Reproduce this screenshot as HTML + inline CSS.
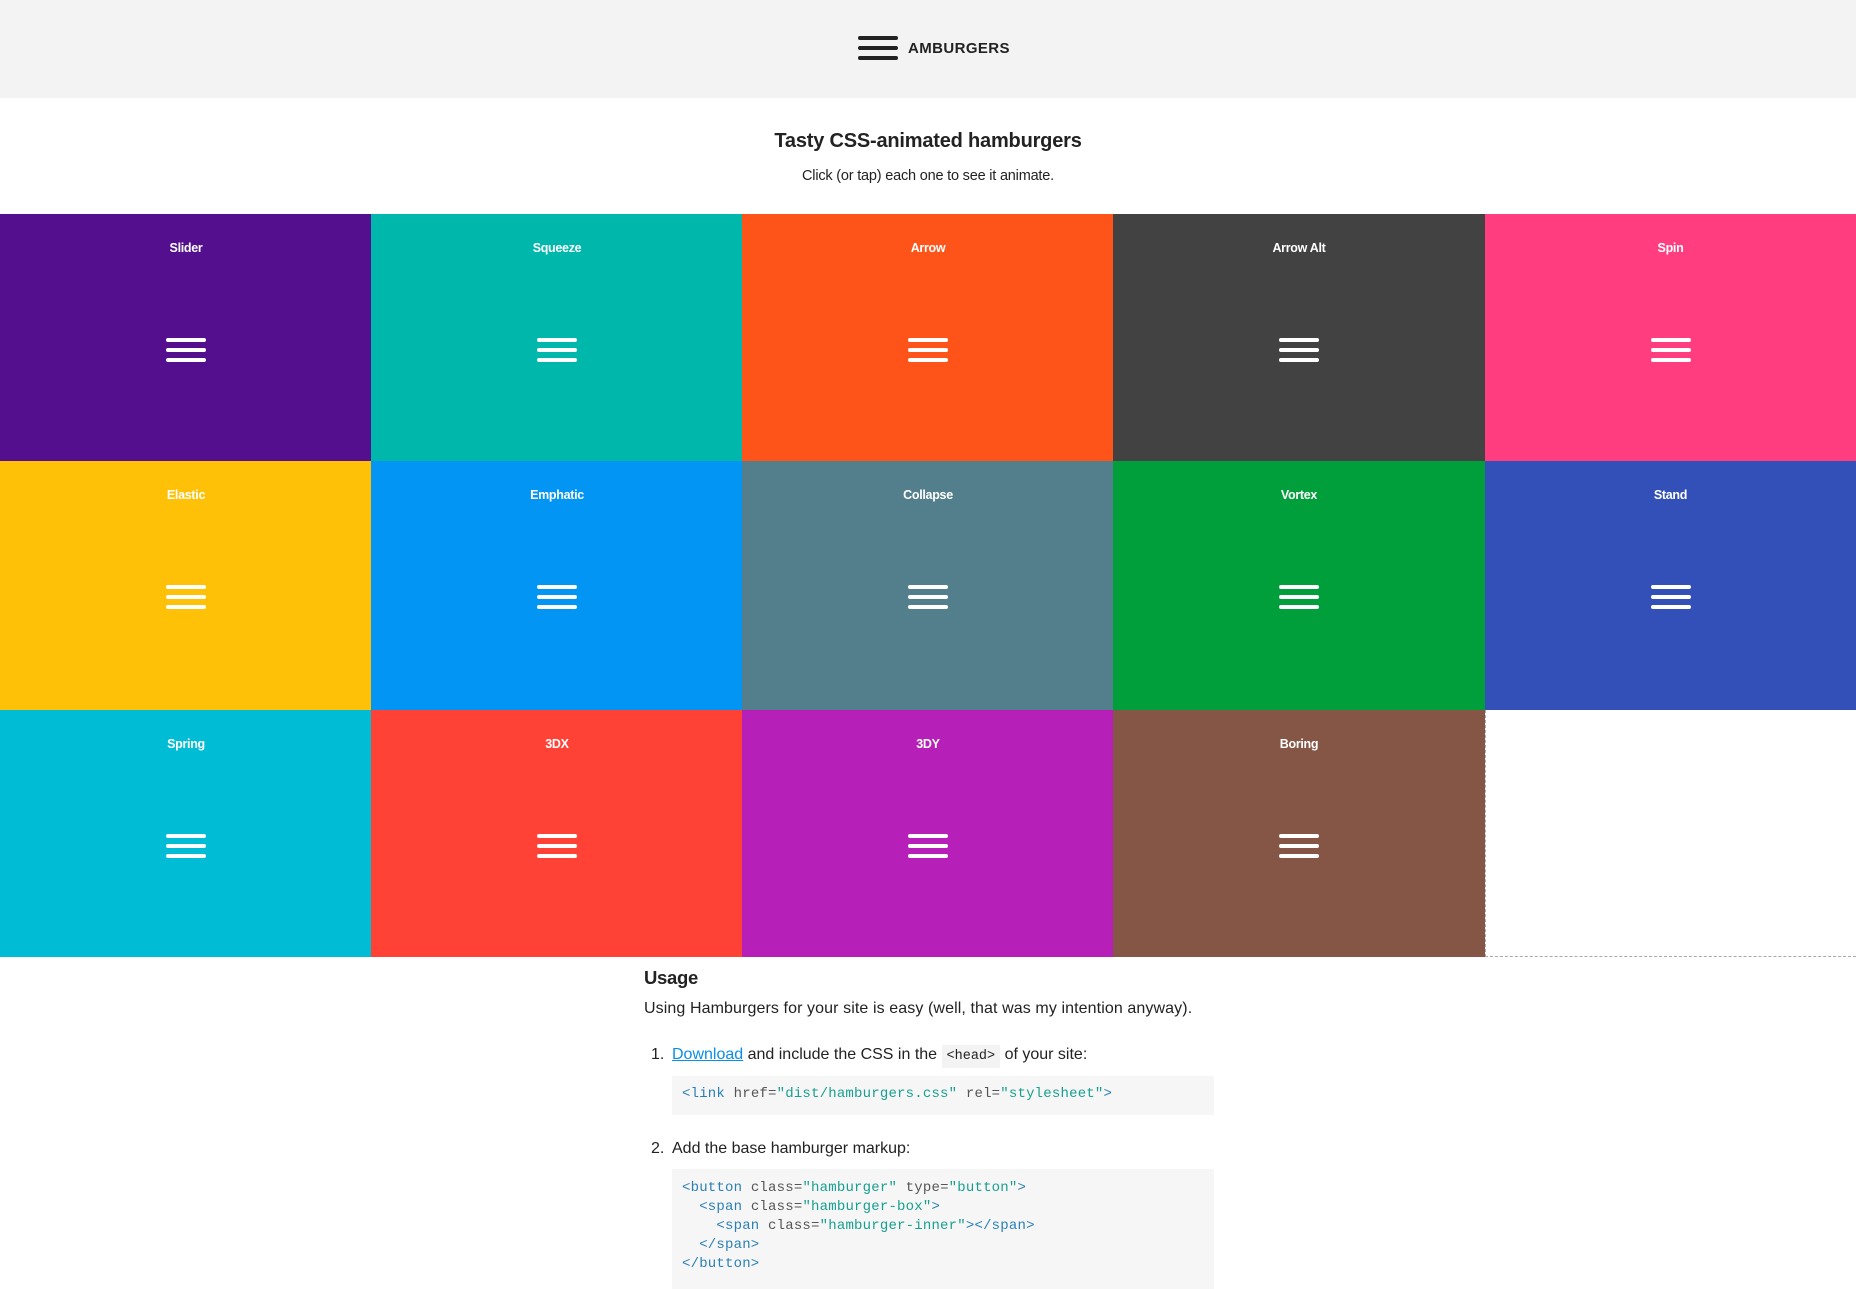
<!DOCTYPE html>
<html><head><meta charset="utf-8"><style>
*{box-sizing:border-box;margin:0;padding:0}
body{width:1856px;height:1280px;overflow:hidden;background:#fff;font-family:"Liberation Sans",sans-serif;color:#222}
.hdr{height:98px;background:#f3f3f3;position:relative}
.logo{position:absolute;left:858px;top:36px;width:40px}
.logo i{display:block;height:4px;background:#222;border-radius:2px;margin-bottom:6px}
.brand{position:absolute;left:908px;top:40px;font-size:15px;font-weight:bold;letter-spacing:0.4px;color:#222}
h1{position:absolute;top:130px;width:1856px;text-align:center;font-size:20px;font-weight:bold;color:#222;letter-spacing:-0.2px}
.sub{position:absolute;top:168px;width:1856px;text-align:center;font-size:14.5px;color:#222;letter-spacing:-0.2px}
.grid{position:absolute;top:214px;left:0;width:1856px}
.c{position:absolute;width:372px;color:#fff}
.c b{position:absolute;top:27px;width:100%;text-align:center;font-size:12.5px;font-weight:bold;letter-spacing:-0.3px}
.c .h{position:absolute;left:166px;width:40px;top:124px}
.c .h i{display:block;height:4px;background:#fff;border-radius:2px;margin-bottom:6px}
.usage{position:absolute;left:644px;top:967px;width:700px;white-space:nowrap}
.usage h2{font-size:18.5px;font-weight:bold;color:#222;letter-spacing:-0.3px}
.usage p{font-size:16px;margin-top:11px;letter-spacing:0.1px}
.li{position:absolute;left:0;font-size:16px;letter-spacing:0px;white-space:nowrap}
.li span.n{position:absolute;left:-21px}
a{color:#0a8ee8}
code.in{font-family:"Liberation Mono",monospace;font-size:13.5px;background:#f3f3f3;padding:4px 5px;letter-spacing:0}
pre{position:absolute;left:0;width:542px;background:#f6f6f6;font-family:"Liberation Mono",monospace;font-size:14px;line-height:19px;padding:10px 10px;color:#555;letter-spacing:0.2px}
.t{color:#2a7fb5}.v{color:#17a08f}
</style></head><body>
<div class="hdr"><div class="logo"><i></i><i></i><i></i></div><div class="brand">AMBURGERS</div></div>
<h1>Tasty CSS-animated hamburgers</h1>
<div class="sub">Click (or tap) each one to see it animate.</div>
<div class="grid">
<div class="c" style="left:0;top:0;height:248px;background:#530f8e"><b>Slider</b><div class="h"><i></i><i></i><i></i></div></div>
<div class="c" style="left:371px;top:0;height:248px;background:#00b7ac"><b>Squeeze</b><div class="h"><i></i><i></i><i></i></div></div>
<div class="c" style="left:742px;top:0;height:248px;background:#ff5419"><b>Arrow</b><div class="h"><i></i><i></i><i></i></div></div>
<div class="c" style="left:1113px;top:0;height:248px;background:#424242"><b>Arrow Alt</b><div class="h"><i></i><i></i><i></i></div></div>
<div class="c" style="left:1485px;top:0;height:248px;width:371px;background:#ff3d7f"><b>Spin</b><div class="h"><i></i><i></i><i></i></div></div>
<div class="c" style="left:0;top:247px;height:249px;background:#ffc107"><b>Elastic</b><div class="h"><i></i><i></i><i></i></div></div>
<div class="c" style="left:371px;top:247px;height:249px;background:#0295f4"><b>Emphatic</b><div class="h"><i></i><i></i><i></i></div></div>
<div class="c" style="left:742px;top:247px;height:249px;background:#537f8c"><b>Collapse</b><div class="h"><i></i><i></i><i></i></div></div>
<div class="c" style="left:1113px;top:247px;height:249px;background:#009f3c"><b>Vortex</b><div class="h"><i></i><i></i><i></i></div></div>
<div class="c" style="left:1485px;top:247px;height:249px;width:371px;background:#3350b8"><b>Stand</b><div class="h"><i></i><i></i><i></i></div></div>
<div class="c" style="left:0;top:496px;height:247px;background:#00bcd4"><b>Spring</b><div class="h"><i></i><i></i><i></i></div></div>
<div class="c" style="left:371px;top:496px;height:247px;background:#ff4136"><b>3DX</b><div class="h"><i></i><i></i><i></i></div></div>
<div class="c" style="left:742px;top:496px;height:247px;background:#b620b9"><b>3DY</b><div class="h"><i></i><i></i><i></i></div></div>
<div class="c" style="left:1113px;top:496px;height:247px;background:#855546"><b>Boring</b><div class="h"><i></i><i></i><i></i></div></div>
<div class="c" style="left:1485px;top:496px;height:247px;width:371px;border-left:1px dashed #aaa;border-bottom:1px dashed #aaa"></div>
</div>
<div class="usage">
<h2>Usage</h2>
<p>Using Hamburgers for your site is easy (well, that was my intention anyway).</p>
</div>
<div class="usage" style="top:0;left:672px">
<div class="li" style="top:1046px"><span class="n">1.</span><a href="#">Download</a> and include the CSS in the <code class="in">&lt;head&gt;</code> of your site:</div>
<pre style="top:1076px;height:39px;padding-top:9px"><span class="t">&lt;link</span> href=<span class="v">"dist/hamburgers.css"</span> rel=<span class="v">"stylesheet"</span><span class="t">&gt;</span></pre>
<div class="li" style="top:1140px"><span class="n">2.</span>Add the base hamburger markup:</div>
<pre style="top:1169px;height:120px"><span class="t">&lt;button</span> class=<span class="v">"hamburger"</span> type=<span class="v">"button"</span><span class="t">&gt;</span>
  <span class="t">&lt;span</span> class=<span class="v">"hamburger-box"</span><span class="t">&gt;</span>
    <span class="t">&lt;span</span> class=<span class="v">"hamburger-inner"</span><span class="t">&gt;&lt;/span&gt;</span>
  <span class="t">&lt;/span&gt;</span>
<span class="t">&lt;/button&gt;</span></pre>
</div>
</body></html>
